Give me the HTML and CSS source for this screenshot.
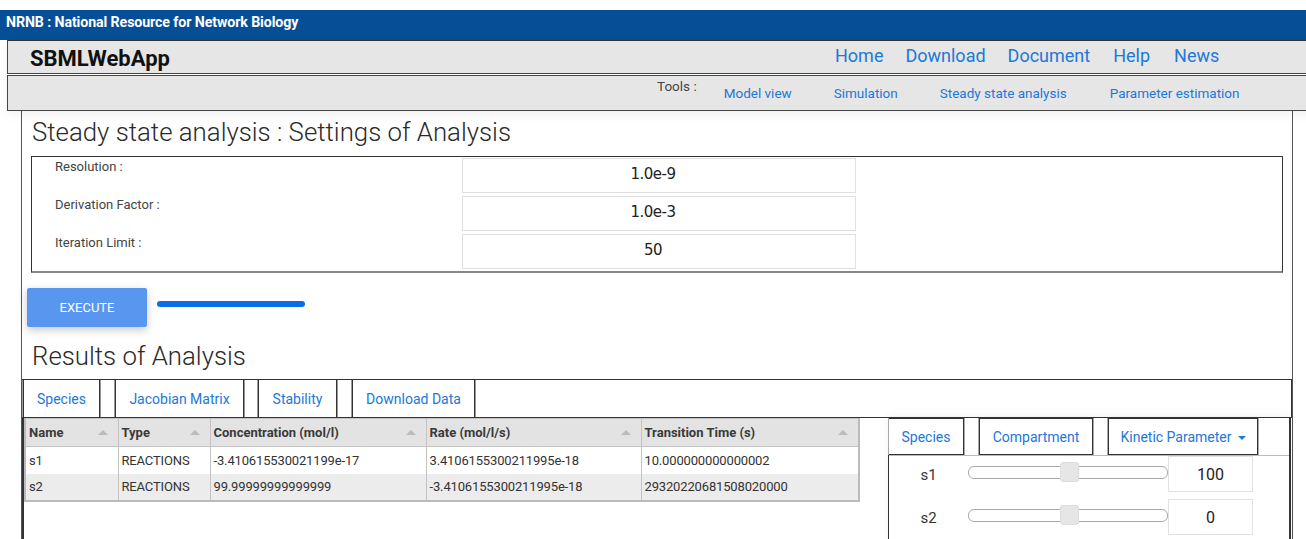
FILE: index.html
```html
<!DOCTYPE html>
<html lang="en">
<head>
<meta charset="utf-8">
<title>SBMLWebApp - Steady state analysis</title>
<link rel="stylesheet" href="styles.css">
</head>
<body>
  <div class="topgap"></div>
  <div class="org-bar">NRNB : National Resource for Network Biology</div>

  <header class="app-header">
    <div class="brand-bar">
      <div class="brand">SBMLWebApp</div>
      <nav class="main-nav">
        <a href="#">Home</a>
        <a href="#">Download</a>
        <a href="#">Document</a>
        <a href="#">Help</a>
        <a href="#">News</a>
      </nav>
    </div>
    <div class="tools-bar">
      <span class="tools-label">Tools :</span>
      <a href="#" class="tool-model">Model view</a>
      <a href="#" class="tool-sim">Simulation</a>
      <a href="#" class="tool-steady">Steady state analysis</a>
      <a href="#" class="tool-param">Parameter estimation</a>
    </div>
  </header>

  <main class="page">
    <h1 class="section-title">Steady state analysis : Settings of Analysis</h1>

    <div class="settings">
      <label class="set-label">Resolution :</label>
      <div class="set-input">1.0e-9</div>
      <label class="set-label">Derivation Factor :</label>
      <div class="set-input">1.0e-3</div>
      <label class="set-label">Iteration Limit :</label>
      <div class="set-input">50</div>
    </div>

    <div class="exec-row">
      <button class="exec-btn">EXECUTE</button>
      <div class="progress"></div>
    </div>

    <h1 class="section-title results-title">Results of Analysis</h1>

    <div class="result-tabs">
      <span class="tab tab-species">Species</span>
      <span class="tab tab-jacobian">Jacobian Matrix</span>
      <span class="tab tab-stability">Stability</span>
      <span class="tab tab-download">Download Data</span>
    </div>

    <div class="result-body">
      <table class="data-table">
        <colgroup>
          <col style="width:93px">
          <col style="width:92px">
          <col style="width:216px">
          <col style="width:215px">
          <col style="width:218px">
        </colgroup>
        <thead>
          <tr>
            <th>Name<span class="sort"></span></th>
            <th>Type<span class="sort"></span></th>
            <th>Concentration (mol/l)<span class="sort"></span></th>
            <th>Rate (mol/l/s)<span class="sort"></span></th>
            <th>Transition Time (s)<span class="sort"></span></th>
          </tr>
        </thead>
        <tbody>
          <tr>
            <td>s1</td>
            <td>REACTIONS</td>
            <td>-3.410615530021199e-17</td>
            <td>3.4106155300211995e-18</td>
            <td>10.000000000000002</td>
          </tr>
          <tr class="alt">
            <td>s2</td>
            <td>REACTIONS</td>
            <td>99.99999999999999</td>
            <td>-3.4106155300211995e-18</td>
            <td>29320220681508020000</td>
          </tr>
        </tbody>
      </table>

      <aside class="param-panel">
        <div class="param-tabs">
          <span class="ptab ptab-species">Species</span>
          <span class="ptab ptab-comp">Compartment</span>
          <span class="ptab ptab-kin">Kinetic Parameter <span class="caret"></span></span>
        </div>
        <div class="param-row">
          <span class="param-name">s1</span>
          <div class="slider"><span class="thumb"></span></div>
          <div class="param-value">100</div>
        </div>
        <div class="param-row">
          <span class="param-name">s2</span>
          <div class="slider"><span class="thumb"></span></div>
          <div class="param-value">0</div>
        </div>
      </aside>
    </div>
  </main>
</body>
</html>
```

FILE: styles.css
```css
* { box-sizing: border-box; }

html, body {
  margin: 0;
  padding: 0;
  background: #fff;
  font-family: Roboto, "Liberation Sans", Arial, sans-serif;
  color: #333;
  overflow: hidden;
}

a { text-decoration: none; color: #2178d8; }

.topgap { height: 10px; }

.org-bar {
  height: 30px;
  background: #064f96;
  color: #fff;
  font-weight: 700;
  font-size: 14.2px;
  line-height: 25px;
  padding-left: 6px;
  letter-spacing: -0.1px;
}

/* header bars */
.app-header {
  margin-left: 7px;
  width: 1310px;
  box-shadow: 0 4px 10px rgba(0,0,0,0.06);
  position: relative;
  z-index: 1;
}

.brand-bar {
  height: 34px;
  background: #e6e6e6;
  border-top: 1px solid #333;
  border-bottom: 1px solid #444;
  border-left: 1px solid #444;
  display: flex;
  align-items: center;
}

.brand {
  font-weight: 700;
  font-size: 22px;
  color: #111;
  margin-left: 22px;
  margin-top: 2px;
  width: 805px;
}

.main-nav {
  display: flex;
  gap: 0;
}
.main-nav a {
  font-size: 18px;
  font-weight: 400;
  color: #2178d8;
  margin-right: 22px;
  margin-top: -4px;
}
.main-nav a:nth-child(3) { margin-right: 23px; }
.main-nav a:nth-child(4) { margin-right: 24px; }

.tools-bar {
  height: 36px;
  margin-top: 1px;
  background: #e6e6e6;
  border-top: 1px solid #444;
  border-bottom: 1px solid #444;
  border-left: 1px solid #444;
  display: flex;
  align-items: flex-start;
  font-size: 13.5px;
}
.tools-label {
  color: #444;
  margin-left: 649px;
  margin-top: 2px;
}
.tools-bar a {
  margin-top: 9px;
  color: #2178d8;
}
.tool-model { margin-left: 27px; }
.tool-sim { margin-left: 42px; }
.tool-steady { margin-left: 42px; }
.tool-param { margin-left: 43px; }

/* main panel */
.page {
  margin-left: 21px;
  width: 1272px;
  height: 430px;
  border-left: 1px solid #555;
  border-right: 1px solid #555;
}

.section-title {
  margin: 0;
  padding: 6px 0 0 10px;
  font-size: 25.8px;
  font-weight: 300;
  line-height: 30px;
  color: #2a2a2a;
}

.settings {
  margin: 9px 9px 0 9px;
  height: 117px;
  border: 1px solid #333;
  border-bottom: 2px solid #888;
  display: grid;
  grid-template-columns: 430px 394px;
  grid-auto-rows: 35px;
  row-gap: 3px;
  padding-top: 1px;
}

.set-label {
  font-size: 13px;
  color: #444;
  padding-left: 23px;
  padding-top: 1px;
}

.set-input {
  border: 1px solid #e0e0e0;
  height: 35px;
  display: flex;
  align-items: center;
  justify-content: center;
  padding-right: 12px;
  padding-bottom: 3px;
  font-family: "DejaVu Sans", Verdana, sans-serif;
  font-size: 15px;
  letter-spacing: -0.5px;
  color: #222;
}

.exec-row {
  display: flex;
  align-items: flex-start;
  margin-top: 15px;
  padding-left: 5px;
}

.exec-btn {
  width: 120px;
  height: 39px;
  background: #5996f0;
  border: none;
  border-radius: 2px;
  color: #fff;
  font-family: Roboto, sans-serif;
  font-size: 13px;
  padding-top: 0;
  box-shadow: 0 3px 8px rgba(0,0,0,0.22);
}

.progress {
  width: 148px;
  height: 6px;
  border-radius: 3px;
  background: #0b6ce8;
  margin-left: 10px;
  margin-top: 13px;
}

.results-title {
  padding-top: 14px;
}

.result-tabs {
  margin-top: 8px;
  height: 39px;
  border: 1px solid #333;
  border-left: none;
  display: flex;
  align-items: stretch;
  padding: 0 0 0 1px;
  background: #fff;
}

.tab {
  display: flex;
  align-items: center;
  justify-content: center;
  border: 1px solid #333;
  border-top: none;
  border-bottom: none;
  color: #2178d8;
  font-size: 14px;
  margin-right: 15px;
  box-shadow: 1px 0 0 #999, -1px 0 0 #999;
}
.tab-species { width: 77px; border-left: 1px solid #333; }
.tab-jacobian { width: 129px; margin-right: 14px; }
.tab-stability { width: 79px; }
.tab-download { width: 123px; }

.result-body {
  display: flex;
  align-items: flex-start;
  height: 130px;
  border-left: 2px solid #333;
  margin-left: 0;
}

.data-table {
  border-collapse: collapse;
  table-layout: fixed;
  width: 834px;
  font-size: 13px;
  color: #333;
  margin-left: 0;
  border: 2px solid #bbb;
  border-top: none;
}
.data-table th {
  background: #e3e3e3;
  height: 28px;
  text-align: left;
  font-weight: 700;
  padding: 0 3px;
  border: 1px solid #c4c4c4;
  position: relative;
  color: #3a3a3a;
}
.data-table td {
  height: 27px;
  padding: 0 3px;
  border-left: 1px solid #c4c4c4;
  border-right: 1px solid #c4c4c4;
  white-space: nowrap;
  overflow: hidden;
  letter-spacing: -0.15px;
}
.data-table tr.alt td {
  background: #ececec;
  border-bottom: 1px solid #c4c4c4;
}

.sort {
  position: absolute;
  right: 10px;
  top: 11px;
  width: 0;
  height: 0;
  border-left: 5px solid transparent;
  border-right: 5px solid transparent;
  border-bottom: 5px solid #bbb;
}

.param-panel {
  margin-left: 28px;
  width: 403px;
  height: 130px;
  border-left: 1px solid #333;
  border-right: 2px solid #333;
  box-shadow: 0 -3px 8px rgba(0,0,0,0.05);
}

.param-tabs {
  display: flex;
  height: 38px;
  border-bottom: 1px solid #bbb;
}
.ptab {
  display: flex;
  align-items: center;
  justify-content: center;
  border: 1px solid #333;
  border-top: 1px solid #333;
  color: #2178d8;
  font-size: 14px;
  margin-right: 15px;
  box-shadow: 1px 0 0 #aaa, -1px 0 0 #aaa;
}
.ptab-species { width: 75px; border-left: none; }
.ptab-comp { width: 114px; }
.ptab-kin { width: 150px; }

.caret {
  display: inline-block;
  width: 0;
  height: 0;
  margin-left: 6px;
  margin-top: 2px;
  border-left: 4px solid transparent;
  border-right: 4px solid transparent;
  border-top: 4px solid #2178d8;
}

.param-row {
  display: flex;
  align-items: flex-start;
  height: 43px;
}
.param-name {
  width: 79px;
  text-align: center;
  font-size: 15px;
  color: #333;
  margin-top: 10px;
}
.slider {
  width: 200px;
  height: 13px;
  margin-top: 10px;
  border: 1px solid #aaa;
  border-radius: 6px;
  background: #fff;
  position: relative;
}
.thumb {
  position: absolute;
  left: 91px;
  top: -5px;
  width: 19px;
  height: 20px;
  border-radius: 3px;
  background: #e6e6e6;
  border: 1px solid #ddd;
}
.param-value {
  width: 85px;
  height: 36px;
  margin-top: 0;
  border: 1px solid #e2e2e2;
  display: flex;
  align-items: center;
  justify-content: center;
  font-size: 16px;
  color: #222;
}
```
